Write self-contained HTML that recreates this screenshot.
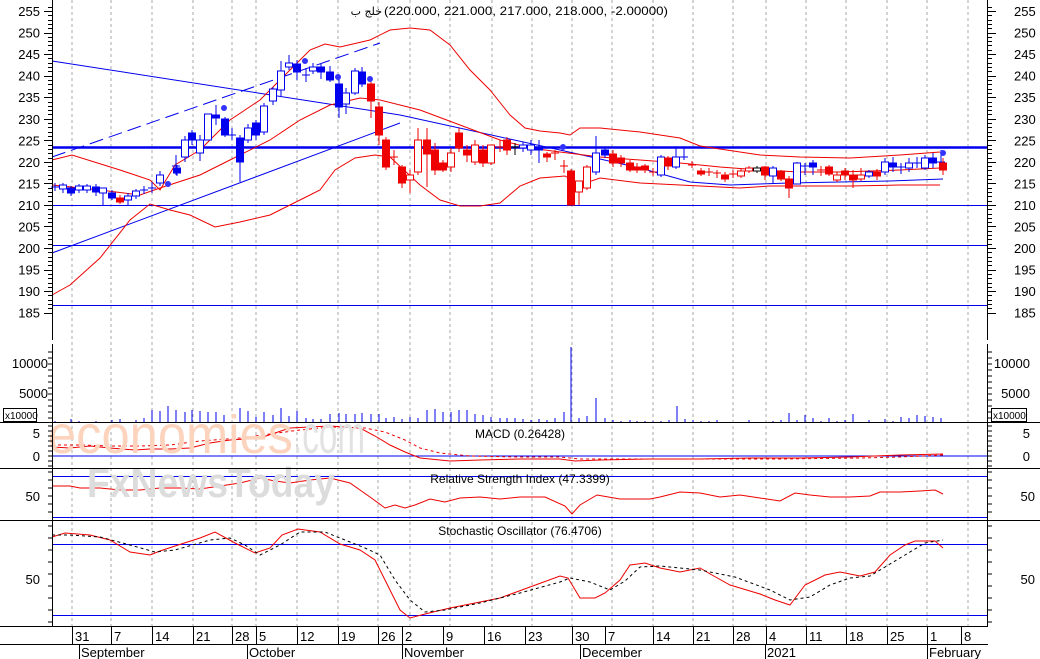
<!DOCTYPE html>
<html><head><meta charset="utf-8"><style>
html,body{margin:0;padding:0;background:#fff;width:1040px;height:659px;overflow:hidden}
svg{display:block}
text{font-family:"Liberation Sans",sans-serif;font-size:13px;fill:#000}
</style></head><body>
<svg id="s" width="1040" height="659" xmlns="http://www.w3.org/2000/svg"></svg>
<script>
var S=document.getElementById('s'),o='';
function L(x1,y1,x2,y2,c,w,d){o+='<line x1="'+x1+'" y1="'+y1+'" x2="'+x2+'" y2="'+y2+'" stroke="'+c+'" stroke-width="'+(w||1)+'"'+(d?' stroke-dasharray="'+d+'"':'')+'/>';}
function P(pts,c,d,w){o+='<polyline fill="none" stroke="'+c+'" stroke-width="'+(w||1)+'"'+(d?' stroke-dasharray="'+d+'"':'')+' points="'+pts+'"/>';}
function T(x,y,t,a,st){o+='<text x="'+x+'" y="'+y+'"'+(a?' text-anchor="'+a+'"':'')+(st?' style="'+st+'"':'')+'>'+t+'</text>';}
var G=[72,111,152,193,232,256,297,338,378,410,450,492,532,572,612,653,693,733,766,806,846,887,927,968];
G.forEach(function(x){L(x,0,x,626,'#aaa',1,'3,3');});
function py(p){return 11+(255-p)*4.31;}
L(52,147.5,988,147.5,'#0000ee',2.5);L(52,205.5,988,205.5,'#0000ee');L(52,245.5,988,245.5,'#0000ee');L(52,305.5,988,305.5,'#0000ee');
P('52,61 400,115 560,150 640,168 690,182 730,185 790,183 890,181 943,179','#0000ee');
L(52,253,400,123,'#0000ee');
L(52,157,380,43,'#0000ee',1,'14,6');
P('52,160 72,155 120,170 150,180 160,190 175,165 200,150 230,120 260,100 290,70 310,50 325,44 340,47 370,40 390,30 410,28 430,30 450,45 470,70 490,90 510,115 525,128 540,131 560,133 570,135 580,128 600,128 640,132 680,138 700,146 760,155 800,157 850,158 900,155 940,152','#ee0000');
P('52,185 100,190 140,195 160,188 200,175 230,160 270,140 300,120 330,105 360,98 380,100 420,110 460,125 500,140 530,148 560,152 600,157 640,160 680,163 720,167 760,170 800,172 840,172 900,170 940,168','#ee0000');
P('52,295 70,285 100,258 130,220 150,204 170,210 190,215 215,227 240,222 270,215 300,200 320,190 335,170 355,158 375,155 390,157 420,185 440,200 460,206 480,206 500,203 520,186 540,178 565,176 580,185 600,178 640,183 700,186 740,188 770,186 800,186 850,186 900,185 940,185','#ee0000');
var B='#0000ee',R='#ee0000';
var C=[[55,187,187,183,191,'bc'],[63,185,189,183,193,'bh'],[71,188,193,186,196,'bf'],[79,186,190,184,193,'bh'],[87,186,190,184,193,'bh'],[96,187,192,184,196,'bf'],[103,188,193,188,206,'bh'],[112,193,198,190,200,'bf'],[120,198,202,195,204,'rf'],[128,196,200,193,205,'bh'],[136,191,196,189,199,'bh'],[144,190,190,186,194,'bc'],[152,188,188,182,193,'bc'],[160,175,183,171,186,'bh'],[176,166,166,155,175,'bc'],[177,168,173,165,176,'bf'],[185,140,157,136,162,'bh'],[192,133,140,130,145,'bf'],[200,140,153,135,161,'bh'],[208,114,140,114,140,'bh'],[216,115,118,105,125,'bf'],[225,119,135,117,137,'bf'],[232,135,135,128,140,'bc'],[240,138,162,135,182,'bf'],[248,128,140,124,143,'bh'],[256,123,135,120,140,'bf'],[264,106,132,103,135,'bh'],[273,89,101,87,105,'bh'],[281,71,90,61,96,'bh'],[289,63,67,55,70,'bh'],[297,64,72,60,80,'bf'],[306,75,75,68,82,'bc'],[313,67,71,63,74,'bh'],[321,67,72,64,79,'bf'],[330,72,80,66,82,'bf'],[339,84,107,79,118,'bf'],[346,93,104,88,114,'bh'],[355,71,93,68,95,'bh'],[362,72,84,67,87,'bf'],[371,84,101,82,118,'rf'],[379,107,135,102,145,'rf'],[386,140,167,137,170,'rf'],[394,157,157,150,165,'rc'],[402,167,183,165,188,'rf'],[410,175,180,170,193,'rh'],[418,140,172,128,175,'rh'],[427,140,154,128,187,'rf'],[435,150,170,143,175,'rf'],[443,163,170,160,172,'rf'],[451,153,167,148,172,'rh'],[459,133,148,128,152,'rf'],[467,150,155,145,162,'rf'],[475,145,162,140,165,'rh'],[483,150,163,145,167,'rf'],[491,145,163,145,165,'rh'],[500,147,147,140,152,'rc'],[507,140,150,137,155,'rf'],[515,147,147,143,155,'kc'],[523,145,148,142,152,'bh'],[531,145,150,140,155,'bh'],[539,147,150,140,163,'bf'],[547,154,157,152,162,'rf'],[555,153,157,150,160,'rc'],[564,166,166,160,173,'rc'],[571,171,205,169,205,'rf'],[579,181,192,181,205,'rh'],[587,167,188,165,190,'rh'],[596,153,172,136,175,'bh'],[605,150,155,148,158,'bf'],[613,154,163,150,167,'rf'],[621,158,163,155,167,'rf'],[630,163,170,160,172,'rf'],[637,167,170,163,173,'rf'],[645,166,170,164,173,'rf'],[653,172,172,168,176,'rc'],[661,157,175,155,177,'bh'],[668,158,166,156,170,'rf'],[676,157,167,148,169,'bh'],[684,157,157,148,160,'bc'],[692,165,165,161,168,'rc'],[701,171,174,168,176,'rf'],[709,172,172,168,176,'rc'],[717,173,173,170,178,'rc'],[725,175,179,172,182,'rf'],[733,174,174,170,178,'rc'],[741,171,176,169,178,'rh'],[749,168,171,166,173,'rh'],[757,168,171,166,173,'kh'],[765,167,175,166,180,'rf'],[773,168,176,166,184,'bh'],[781,171,179,170,181,'rf'],[789,179,188,176,198,'rf'],[797,163,184,162,184,'bh'],[805,166,166,163,175,'bc'],[813,163,167,160,175,'bf'],[821,170,170,166,176,'rc'],[829,167,174,165,176,'rf'],[837,175,180,172,182,'rh'],[845,171,175,168,180,'rf'],[853,175,180,170,188,'rf'],[861,175,179,168,181,'rh'],[869,172,176,170,178,'bh'],[877,172,176,169,180,'rf'],[885,162,172,158,175,'bh'],[893,163,167,157,172,'bf'],[901,167,167,163,174,'bc'],[909,163,168,158,172,'bh'],[917,163,163,157,168,'bc'],[925,158,168,155,170,'bh'],[933,158,163,153,168,'bf'],[941,162,162,150,164,'bc'],[943,163,170,158,175,'rf']];
C.forEach(function(c){var x=c[0],t=c[5],col=t[0]=='b'?B:(t[0]=='r'?R:'#000');
 L(x,c[3],x,c[4],col);
 if(t[1]=='c'){L(x-4,c[1],x+4,c[1],col);}
 else{var h=Math.max(c[2]-c[1],2);o+='<rect x="'+(x-3.5)+'" y="'+c[1]+'" width="7" height="'+h+'" fill="'+(t[1]=='f'?col:'#fff')+'" stroke="'+col+'"/>';}
});
[[168,184],[224,108],[305,61],[338,77],[370,79],[563,147],[943,153]].forEach(function(d){o+='<circle cx="'+d[0]+'" cy="'+d[1]+'" r="3" fill="#3333ff"/>';});
var V={55:421,71:419,79:421,96:421,112:420,120:419,136:420,144:418,152:410,160:411,168:406,176:410,185:412,192:410,200:411,208:412,216:412,224:415,240:408,248:411,256:417,264:412,273:415,281:408,289:416,297:411,306:418,313:419,321:419,330:414,339:413,346:414,355:414,362:413,371:414,379:414,386:418,394:417,402:419,410:417,418:418,427:410,435:409,443:412,451:412,459:410,467:410,475:414,483:415,491:417,500:418,507:418,515:418,523:419,531:420,539:419,547:420,555:418,564:412,571:347,579:418,587:416,596:398,605:418,613:420,621:421,630:420,637:421,645:421,653:421,661:421,669:420,677:406,685:419,693:420,701:421,709:421,717:420,749:420,773:421,781:420,789:413,797:420,805:415,813:418,821:421,829:418,837:421,845:420,853:414,869:420,885:419,893:421,901:417,909:418,917:415,925:416,933:417,941:418};
for(var k in V)L(+k,V[k],+k,422,B);
L(52,456,988,456,B);
P('52,447 70,448 90,446 110,448 135,450 150,449 170,449 190,448 210,443 230,440 260,438 290,428 330,426 360,428 375,436 390,445 405,452 420,458 450,461 480,460 520,459 560,459 575,461 600,460 650,459 700,459 750,458 800,458 850,457 900,455 943,454','#ee0000');
P('52,445 80,445 110,446 140,446 170,445 200,441 240,438 270,434 300,430 330,427 365,428 385,432 405,440 420,448 440,453 470,456 520,457 560,457 580,459 620,459 700,459 780,459 860,458 900,457 943,455','#ee0000','3,3');
L(52,476.5,988,476.5,B);L(52,517.5,988,517.5,B);
P('52,486 70,486 80,488 100,488 120,490 140,490 160,488 180,488 200,489 220,486 240,483 260,478 275,481 290,483 310,480 330,478 350,483 370,497 385,508 395,505 405,508 415,505 430,499 445,502 460,498 480,497 500,499 520,497 545,497 565,506 572,514 580,505 597,495 620,499 650,499 660,497 680,492 700,493 720,497 740,495 760,498 780,501 795,493 810,495 830,497 850,497 870,496 880,492 900,492 920,491 935,490 943,494','#ee0000');
L(52,544.5,988,544.5,B);L(52,615.5,988,615.5,B);
P('52,537 65,533 90,535 110,540 130,552 150,555 160,551 175,546 200,538 215,532 235,543 255,553 270,548 282,535 298,529 320,532 340,544 360,550 375,560 385,580 400,610 410,618 425,614 450,608 500,598 530,587 560,576 568,578 580,598 595,598 605,593 620,580 630,565 645,563 660,568 680,572 700,568 712,575 730,585 760,594 775,600 790,605 805,585 825,575 840,572 860,576 875,572 890,555 905,545 915,541 935,541 943,548','#ee0000');
P('52,535 70,535 100,537 130,545 155,552 175,550 210,540 230,538 245,545 260,555 280,545 300,532 325,532 345,540 365,548 380,555 395,580 410,600 425,612 445,610 480,603 520,593 560,582 570,578 590,582 610,590 625,581 640,567 660,566 700,570 735,577 770,590 790,600 810,597 830,585 850,578 870,576 885,567 905,555 925,543 943,540','#000','3,3');
o+='<text x="48" y="453" textLength="245" lengthAdjust="spacingAndGlyphs" style="font-size:54px;fill:#fcd3bc">economies</text>';
o+='<text x="293" y="453" textLength="72" lengthAdjust="spacingAndGlyphs" style="font-size:54px;fill:#e2e2e2">.com</text>';
o+='<text x="87" y="497" textLength="248" lengthAdjust="spacingAndGlyphs" style="font-size:42px;fill:#dcdcdc;font-weight:bold">FxNewsToday</text>';
L(0,422.5,1040,422.5,'#000');L(0,468.5,1040,468.5,'#000');L(0,520.5,1040,520.5,'#000');
L(52.5,0,52.5,340,'#000');L(52.5,344,52.5,626,'#000');L(987.5,0,987.5,340,'#000');L(987.5,344,987.5,626,'#000');
for(var p=185;p<=256;p++){var y=Math.round(py(p))+.5,len=p%5==0?8:4;L(52,y,52-len,y,'#000');L(988,y,988+len,y,'#000');}
for(var p=185;p<=255;p+=5){var y=py(p)+5;T(40,y,p,'end');T(1014,y,p,'start');}
for(var y=352;y<=422;y+=6){L(52,y,48,y,'#000');L(988,y,992,y,'#000');}
T(48,368,'10000','end');T(48,398,'5000','end');T(1030,368,'10000','end');T(1030,398,'5000','end');
o+='<rect x="3.5" y="408.5" width="33" height="13" fill="#fff" stroke="#000"/><text x="5" y="419" style="font-size:10px">x10000</text>';
o+='<rect x="991.5" y="408.5" width="35" height="13" fill="#fff" stroke="#000"/><text x="993" y="419" style="font-size:10px">x10000</text>';
for(var y=426;y<=466;y+=5){L(52,y,48,y,'#000');L(988,y,992,y,'#000');}
T(40,438,'5','end');T(40,461,'0','end');T(1030,438,'5','end');T(1030,461,'0','end');
for(var y=472;y<=518;y+=8){L(52,y,48,y,'#000');L(988,y,992,y,'#000');}
T(40,501,'50','end');T(1035,501,'50','end');
for(var y=526;y<=624;y+=12){L(52,y,48,y,'#000');L(988,y,992,y,'#000');}
T(40,584,'50','end');T(1035,584,'50','end');
T(382,15,'خلج ب','end','font-family:DejaVu Sans,sans-serif;font-size:11px');
o+='<text x="384" y="15" textLength="284" lengthAdjust="spacingAndGlyphs" style="font-size:12px">(220.000, 221.000, 217.000, 218.000, -2.00000)</text>';
T(520,438,'MACD (0.26428)','middle','font-size:12px');
T(520,483,'Relative Strength Index (47.3399)','middle','font-size:12px');
T(520,535,'Stochastic Oscillator (76.4706)','middle','font-size:12px');
L(0,626.5,988,626.5,'#000');L(0,644.5,988,644.5,'#000');
var D=[[72,'31'],[111,'7'],[152,'14'],[193,'21'],[232,'28'],[256,'5'],[297,'12'],[338,'19'],[378,'26'],[402,'2'],[443,'9'],[484,'16'],[525,'23'],[572,'30'],[605,'7'],[653,'14'],[693,'21'],[733,'28'],[766,'4'],[806,'11'],[846,'18'],[887,'25'],[927,'1'],[961,'8']];
D.forEach(function(d){L(d[0]+.5,626,d[0]+.5,644,'#000');T(d[0]+3,641,d[1]);});
L(79.5,644,79.5,659,'#000');L(247.5,644,247.5,659,'#000');L(402.5,644,402.5,659,'#000');L(580.5,644,580.5,659,'#000');L(765.5,644,765.5,659,'#000');L(927.5,644,927.5,659,'#000');
T(81,657,'September');T(249,657,'October');T(404,657,'November');T(582,657,'December');T(767,657,'2021');T(929,657,'February');
S.innerHTML=o;
</script>
</body></html>
